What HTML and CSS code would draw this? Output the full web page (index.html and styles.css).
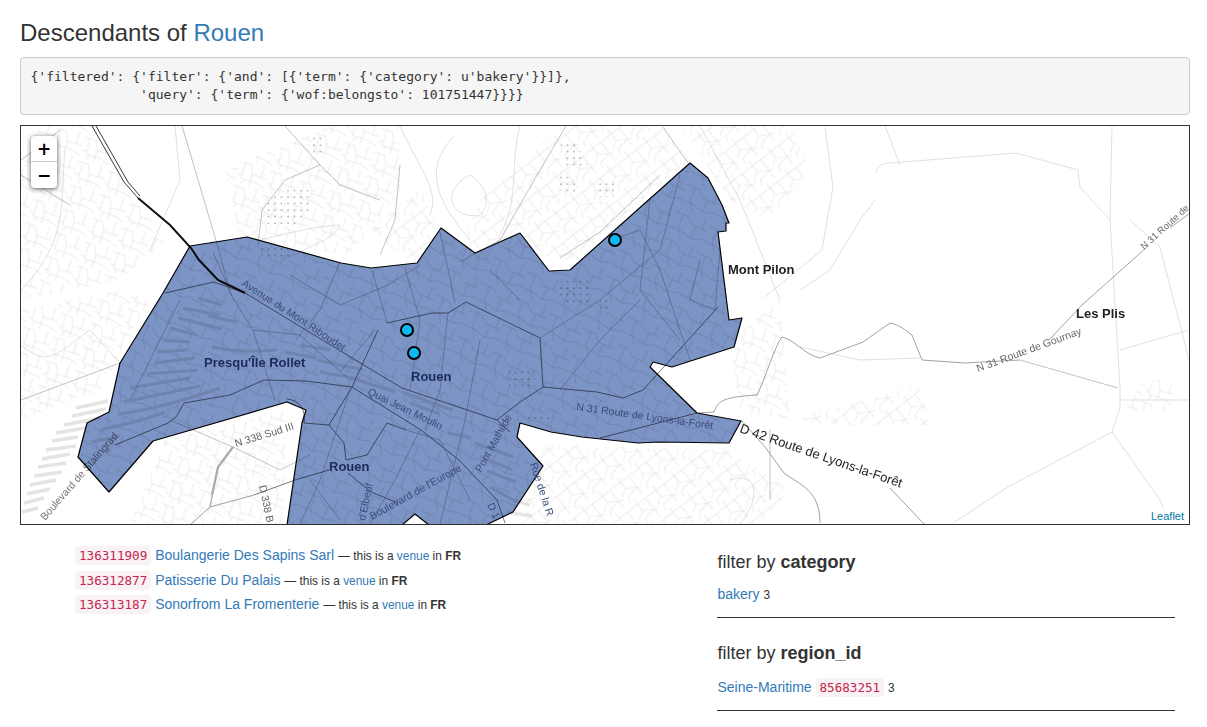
FILE: index.html
```html
<!DOCTYPE html>
<html lang="en">
<head>
  <meta charset="UTF-8">
  <title>Descendants of Rouen</title>
  <link rel="stylesheet" href="styles.css">
</head>
<body>
  <div class="container">
    <h3 class="page-title">Descendants of <a href="#">Rouen</a></h3>
    <pre class="query">{'filtered': {'filter': {'and': [{'term': {'category': u'bakery'}}]},
              'query': {'term': {'wof:belongsto': 101751447}}}}</pre>

    <div class="map">
      <svg class="map-canvas" viewBox="21 126 1168 398" xmlns="http://www.w3.org/2000/svg">
        <defs>
          <pattern id="streets-a" width="31" height="25" patternUnits="userSpaceOnUse" patternTransform="rotate(18)">
            <path d="M0 4H11L15 13H31M5 4V20H21M15 13V25M24 0V13M0 17H5M21 20L31 23M9 20L7 25" class="pat"/>
          </pattern>
          <pattern id="streets-b" width="23" height="28" patternUnits="userSpaceOnUse" patternTransform="rotate(-38)">
            <path d="M0 6H23M8 0V14L18 20V28M0 19L8 14M18 6V20L23 22M3 28L5 22L18 20" class="pat"/>
          </pattern>
          <pattern id="streets-inner" width="37" height="29" patternUnits="userSpaceOnUse" patternTransform="rotate(24)">
            <path d="M0 5H14L20 11H37M9 5V18L16 29M0 21H12L25 24 37 20M25 11V24M31 0V11" class="pat-inner"/>
          </pattern>
          <pattern id="dots" width="6.5" height="6.5" patternUnits="userSpaceOnUse">
            <circle cx="2" cy="2" r=".7" fill="#777"/>
          </pattern>
          <polygon id="district-shape" points="190,246 247,237 341,263 371,268 417,263 441,228 475,253 520,233 549,271 570,270 690,163 708,178 722,205 729,223 726,223 726,231 718,232 729,320 742,318 734,347 672,367 653,362 650,367 697,413 741,421 729,443 659,442 638,443 582,437 551,432 520,423 517,437 543,466 513,512 486,525 429,525 415,514 402,525 287,525 302,423 306,410 287,402 153,441 109,492 78,457 87,423 109,412 120,363 163,293"/>
        </defs>

        <!-- residential street blocks -->
        <g class="blocks-a">
          <path d="M40 126H95L130 190 165 240 120 280 21 300V170Z"/>
          <path d="M225 170L330 126 400 126 400 190 350 255 240 240Z"/>
          <path d="M21 310L120 290 150 300 100 390 21 420Z"/>
          <path d="M165 440L285 410 285 524H130Z"/>
          <path d="M730 340L780 300 790 420 740 410Z"/>
          <path d="M1140 385L1170 375 1175 410 1125 410Z"/>
        </g>
        <g class="blocks-b">
          <path d="M450 270L480 200 560 126H660L690 160 570 260 500 250Z"/>
          <path d="M370 230L420 190 440 230 410 262Z"/>
          <path d="M545 445L730 450 790 490 760 524H520Z"/>
          <path d="M680 126H790L810 170 770 220 730 200Z"/>
          <path d="M790 420L920 385 930 425 830 425Z"/>
        </g>
        <use href="#district-shape" class="blocks-inner"/>
        <g class="dots">
          <rect x="308" y="133" width="18" height="22"/>
          <path d="M262 226L265 200 285 190 314 190 312 210 290 228Z"/>
          <path d="M560 140L575 140 587 165 565 170Z"/>
          <path d="M558 170L580 182 575 195 560 190Z"/>
          <rect x="594" y="183" width="22" height="14"/>
          <path d="M555 290L565 277 589 277 589 303 566 303Z"/>
          <rect x="509" y="370" width="26" height="20"/>
          <rect x="528" y="413" width="24" height="10"/>
          <rect x="600" y="300" width="9" height="14"/>
          <rect x="262" y="244" width="28" height="14"/>
        </g>

        <!-- river side stripes -->
        <path class="band" d="M76 408L108 401M72 416L106 409M64 425L100 418M56 433L85 428M52 441L78 437M46 450L76 446M42 459L70 454M38 467L66 463M34 476L62 472M30 485L56 480M27 494L50 489M24 503L44 498M22 512L38 508M513 500L530 505M507 512L532 516"/>
        <path class="wave" d="M198 298L222 305M183 308L220 315M178 318L222 329M208 316L237 322M170 328L197 335M163 340L190 342M212 347C235 352 255 352 277 350M158 352L188 350M155 363L195 358M147 374L198 370M130 388L190 378M124 402L200 386M118 414C150 410 180 402 220 388M100 430C125 424 140 422 165 412M92 442L120 436M285 352L316 358M317 360L363 370M320 372L360 379M300 345L330 350M405 393L452 410M410 403L440 414M448 433L471 438M475 443L513 457M480 456L512 470M487 471L516 482M490 487L513 500M345 376L395 392"/>

        <!-- minor and main roads -->
        <path class="rd-faint" d="M65 150C60 200 70 240 21 290M175 126L180 180 150 250M825 127L833 187 822 250 765 297M876 173C876 165 885 163 890 163L1016 153 1078 170 1080 187 1110 220 1120 387V407L1112 432 1008 487 953 523M885 126L900 165M1112 126L1110 220M1189 330L1120 350M1189 400H1120M1112 432L1160 500 1170 524M875 200L860 220 830 270 800 290M780 300L740 200 700 126M1130 220L1160 247 1189 360M21 345C50 370 60 350 90 330L120 363M800 347L860 360 920 358M730 480C760 470 760 500 740 524M400 126C420 170 440 190 430 215M455 135C420 170 440 205 470 240M470 175C440 190 450 220 480 215 495 200 480 180 470 175M520 126C510 160 520 200 500 235M260 240C280 235 320 225 340 225 335 240 300 250 283 260"/>
        <path class="rd" d="M182 126L218 247 230 293 253 330 275 400M663 127L688 163M21 160L60 130M285 126L320 165 340 185 380 200M320 165L285 180 262 210 258 245M400 165L395 220 380 255M566 126L540 170 500 240 460 262M660 175L600 232 560 258M21 175L70 205M120 363L21 400M233 447L170 420M233 447L280 470 310 455M770 430L770 500M1020 360L1118 388"/>
        <path class="rd-inner" d="M213 252L232 296M455 302L440 232M387 323L372 270M410 390L420 320 405 268M448 313L440 390 425 430M350 390L320 480 300 524M480 340L465 420 440 524M540 338L600 300 660 250 680 175M560 390L600 340 640 300M253 330L300 335 350 380M340 262L320 310 296 340M610 240L640 230 660 270 690 360M650 200L640 290 680 340M700 260L690 300 715 310 720 250M420 430L395 480 370 524M406 430L440 440 470 500M310 480L340 520M290 275L340 305 388 285 420 265M520 300L490 270M180 300L130 400M375 330L340 372"/>
        <path class="rd-main" d="M245 293L339 350 367 367 402 388 497 420 510 432M387 323L432 313 448 313 466 302 540 338 543 387 597 392 623 398 643 390 718 307M184 403L230 395 264 380 306 381 352 387 421 430 459 460 497 500 505 523M184 403L176 417 168 423 115 445M287 399C300 400 306 410 304 423L329 425 344 443 346 460 367 455 387 423 406 430M329 425L352 387 378 330M295 480L329 470M348 473L371 492 398 503M497 420L520 402 543 387M600 438L697 413M254 495L295 480M165 293L214 282 245 293"/>
        <path class="rd-out" d="M698 413L714 412C718 400 725 397 757 395 765 380 775 345 782 337 795 340 805 355 820 358L863 342 890 323C900 325 905 330 912 335L922 360 965 363 1020 360M741 420L765 447 784 473C800 485 820 490 820 523M890 488L925 525M1049 340L1082 305 1147 247M1170 228L1198 207M233 447L218 467 210 507 191 524M210 507L254 495"/>
        <path class="rd-wide" d="M233 447L218 467 212 495"/>

        <!-- railway -->
        <path class="rail" d="M92 126L124 182 138 198"/>
        <path class="rail" d="M96 126L128 182 140 196"/>
        <path class="rail-main" d="M138 198L170 225 191 248 199 260 218 280 245 293"/>

        <text class="road-under" transform="translate(45 521) rotate(-49)">Boulevard de Stalingrad</text>

        <use href="#district-shape" class="district"/>

        <g class="road-labels">
          <text transform="translate(241 285) rotate(33)">Avenue du Mont Riboudet</text>
          <text transform="translate(367 394) rotate(26)">Quai Jean Moulin</text>
          <text transform="translate(576 410) rotate(8)">N 31 Route de Lyons-la-Forêt</text>
          <text transform="translate(372 520) rotate(-29)">Boulevard de l'Europe</text>
          <text transform="translate(481 473) rotate(-61)">Pont Mathilde</text>
          <text transform="translate(365 521) rotate(-78)">d'Elbeuf</text>
          <text transform="translate(487 505) rotate(64)">D 1</text>
          <text transform="translate(530 464) rotate(72)">Rue de la R</text>
          <text class="on-white" transform="translate(236 447) rotate(-17)">N 338 Sud III</text>
          <text class="on-white" transform="translate(259 486) rotate(78)">D 338 B</text>
          <text class="on-white" transform="translate(978 372) rotate(-20)">N 31 Route de Gournay</text>
          <text class="on-white small-road" transform="translate(1144 250) rotate(-42)">N 31 Route de</text>
          <text class="big-road" transform="translate(739 432) rotate(19)">D 42 Route de Lyons-la-Forêt</text>
        </g>
        <g class="places">
          <text class="navy" x="204" y="367">Presqu'Île Rollet</text>
          <text class="navy" x="411" y="381">Rouen</text>
          <text class="navy" x="329" y="471">Rouen</text>
          <text x="728" y="274">Mont Pilon</text>
          <text x="1076" y="318">Les Plis</text>
        </g>

        <circle class="pin" cx="615" cy="240" r="6"/>
        <circle class="pin" cx="407" cy="330" r="6"/>
        <circle class="pin" cx="414" cy="353" r="6"/>
      </svg>

      <div class="zoom-bar">
        <a href="#" class="zoom-in">+</a>
        <a href="#" class="zoom-out">−</a>
      </div>
      <div class="attribution"><a href="#">Leaflet</a></div>
    </div>

    <div class="row">
      <div class="results">
        <ul class="venues">
          <li><code>136311909</code> <a href="#">Boulangerie Des Sapins Sarl</a> <small>— this is a <a href="#">venue</a> in <strong>FR</strong></small></li>
          <li><code>136312877</code> <a href="#">Patisserie Du Palais</a> <small>— this is a <a href="#">venue</a> in <strong>FR</strong></small></li>
          <li><code>136313187</code> <a href="#">Sonorfrom La Fromenterie</a> <small>— this is a <a href="#">venue</a> in <strong>FR</strong></small></li>
        </ul>
      </div>
      <div class="filters">
        <h4>filter by <strong>category</strong></h4>
        <p><a href="#">bakery</a> <small>3</small></p>
        <hr>
        <h4>filter by <strong>region_id</strong></h4>
        <p class="with-code"><a href="#">Seine-Maritime</a> <code>85683251</code> <small>3</small></p>
        <hr>
      </div>
    </div>
  </div>
</body>
</html>
```

FILE: styles.css
```css
* {
  box-sizing: border-box;
}

body {
  margin: 0;
  font-family: "Liberation Sans", Arial, sans-serif;
  font-size: 14px;
  line-height: 20px;
  color: #333;
  background: #fff;
}

a {
  color: #337ab7;
  text-decoration: none;
}

.container {
  padding: 0 17px 0 20px;
}

.page-title {
  margin: 19px 0 11px;
  font-size: 24px;
  font-weight: 400;
  line-height: 27px;
}

.query {
  margin: 0 0 10px;
  padding: 9.5px;
  height: 58px;
  font-family: "DejaVu Sans Mono", monospace;
  font-size: 13px;
  line-height: 18.5px;
  color: #333;
  background: #f5f5f5;
  border: 1px solid #ccc;
  border-radius: 4px;
}

/* map */
.map {
  position: relative;
  height: 400px;
  border: 1px solid #333;
  overflow: hidden;
  background: #fff;
}

.map-canvas {
  display: block;
  width: 100%;
  height: 100%;
  isolation: isolate;
}

.pat {
  fill: none;
  stroke: #d8d8d8;
  stroke-width: .5;
}

.pat-inner {
  fill: none;
  stroke: #c2c2c2;
  stroke-width: .5;
}

.blocks-a {
  fill: url(#streets-a);
}

.blocks-b {
  fill: url(#streets-b);
}

.blocks-inner {
  fill: url(#streets-inner);
}

.dots {
  fill: url(#dots);
}

.band {
  fill: none;
  stroke: #e4e4e4;
  stroke-width: 3.5;
}

.wave {
  fill: none;
  stroke: #e0e0e0;
  stroke-width: 3;
}

.rd-faint {
  fill: none;
  stroke: #d2d2d2;
  stroke-width: .7;
}

.rd {
  fill: none;
  stroke: #a8a8a8;
  stroke-width: .7;
}

.rd-inner {
  fill: none;
  stroke: #9a9a9a;
  stroke-width: .6;
}

.rd-main {
  fill: none;
  stroke: #777;
  stroke-width: 1;
}

.rd-out {
  fill: none;
  stroke: #8a8a8a;
  stroke-width: .8;
}

.rd-wide {
  fill: none;
  stroke: #aaa;
  stroke-width: 2.2;
}

.rail {
  fill: none;
  stroke: #222;
  stroke-width: .9;
}

.rail-main {
  fill: none;
  stroke: #111;
  stroke-width: 2;
}

.district {
  fill: #7d95c6;
  stroke: #000;
  stroke-width: 1.2;
  stroke-linejoin: round;
  mix-blend-mode: multiply;
}

.road-under {
  font-size: 10.5px;
  fill: #777;
}

.road-labels text {
  font-size: 10.5px;
  fill: #3b4c7c;
}

.road-labels .on-white {
  fill: #666;
}

.road-labels .small-road {
  font-size: 9.5px;
}

.road-labels .big-road {
  font-size: 13px;
  fill: #222;
}

.places text {
  font-size: 13px;
  font-weight: 700;
  fill: #222;
}

.places .navy {
  fill: #1b2b5c;
}

.pin {
  fill: #0bb8f0;
  stroke: #000;
  stroke-width: 2;
}

.zoom-bar {
  position: absolute;
  top: 10px;
  left: 10px;
  width: 26px;
  border-radius: 4px;
  background: #fff;
  box-shadow: 0 1px 5px rgba(0, 0, 0, .65);
}

.zoom-bar a {
  display: block;
  height: 26px;
  font-family: "DejaVu Sans", sans-serif;
  font-size: 17px;
  font-weight: 700;
  line-height: 26px;
  text-align: center;
  color: #000;
}

.zoom-in {
  border-bottom: 1px solid #ccc;
}

.attribution {
  position: absolute;
  right: 0;
  bottom: 0;
  padding: 0 5px;
  font-size: 11px;
  line-height: 16px;
  background: rgba(255, 255, 255, .7);
}

.attribution a {
  color: #0078a8;
}

/* below the map */
.row {
  display: flex;
  margin-top: 15px;
}

.results {
  flex: 0 0 58.333%;
  padding: 3px 15px 0;
}

.filters {
  flex: 0 0 41.667%;
  padding: 2px 15px 0;
}

.venues {
  margin: 0;
  padding: 0 0 0 40px;
  list-style: none;
}

.venues li {
  height: 24.5px;
  line-height: 24px;
}

code {
  padding: 2px 4px;
  font-family: "DejaVu Sans Mono", monospace;
  font-size: 12.6px;
  color: #c7254e;
  background: #f9f2f4;
  border-radius: 4px;
}

small {
  font-size: 11.9px;
}

.filters h4 {
  margin: 10px 0 12px;
  font-size: 18px;
  font-weight: 400;
  line-height: 20px;
}

.filters p {
  margin: 0 0 12px;
}

.filters .with-code {
  padding-top: 2px;
}

.filters hr {
  margin: 0 0 25px;
  border: 0;
  border-top: 1px solid #333;
}
```
